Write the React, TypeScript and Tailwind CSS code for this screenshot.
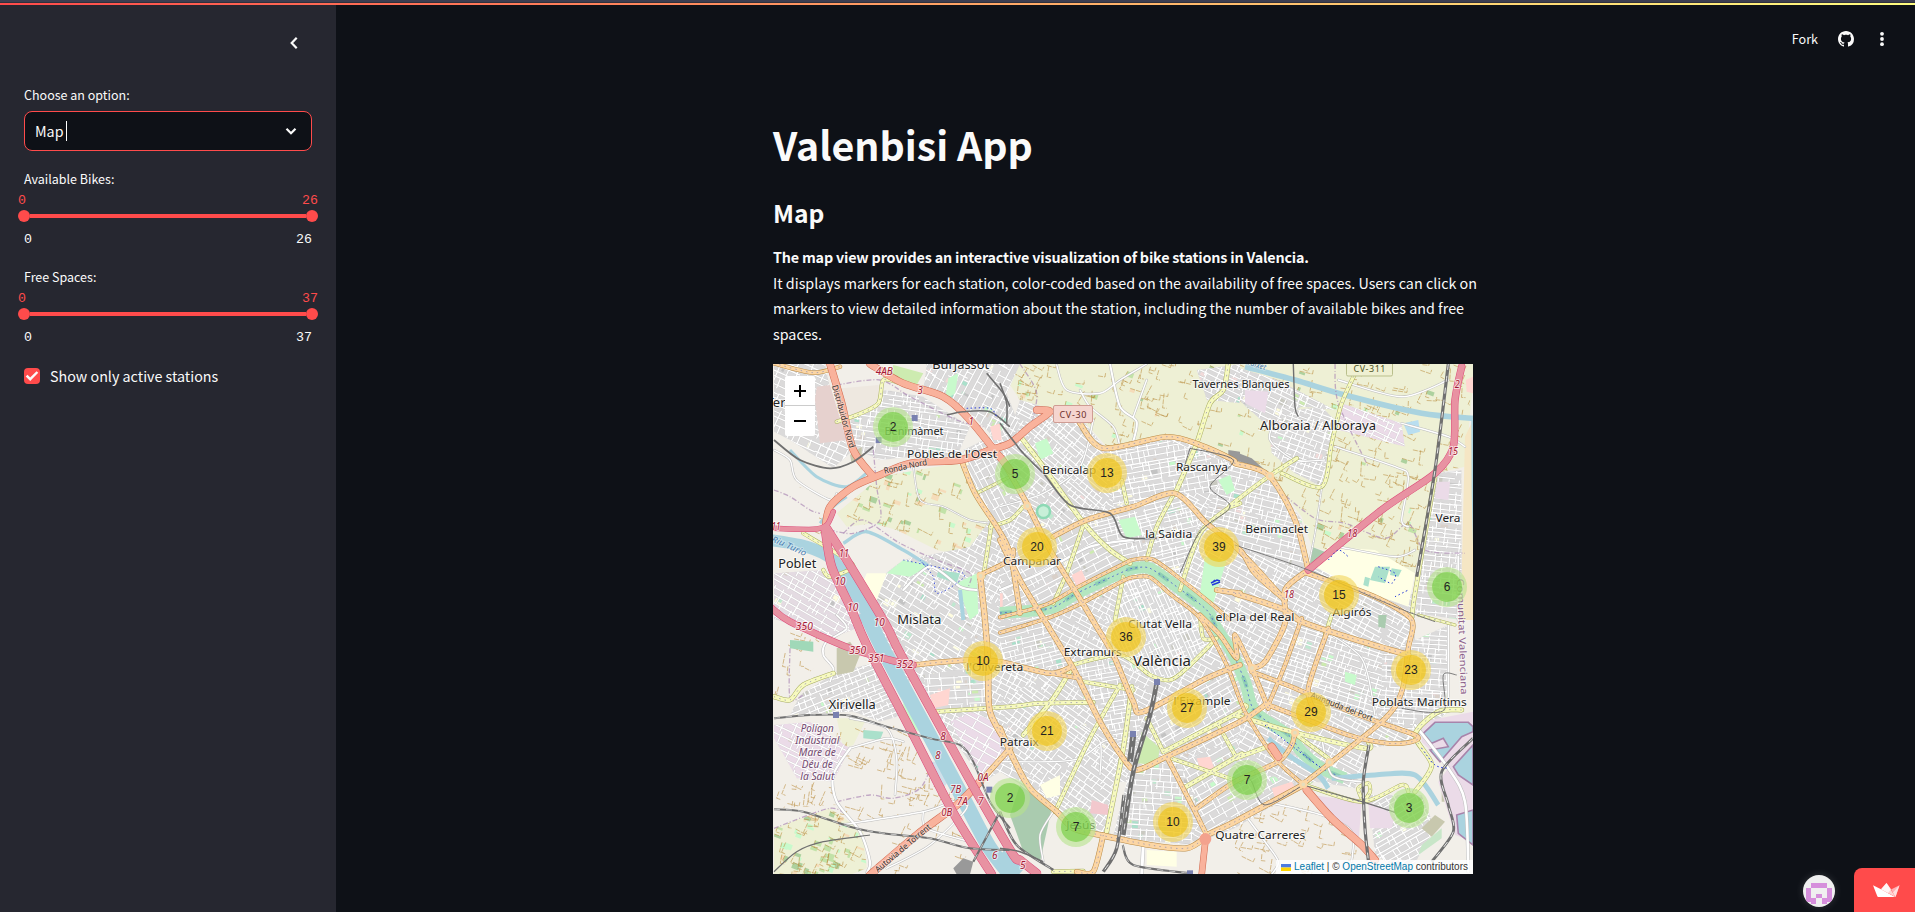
import React from "react";

type Pt = [number, number];

/* Survey tiles: each letter is the origin of a tile measured at three units per pixel. */
const ORIGINS: Record<string, Pt> = {
  a: [770, 360],
  b: [1000, 360],
  c: [1235, 360],
  d: [770, 615],
  e: [1000, 615],
  f: [1235, 615],
};

function parse(src: string): Pt[] {
  let o: Pt = ORIGINS.a;
  const out: Pt[] = [];
  for (const tok of src.trim().split(/\s+/)) {
    if (ORIGINS[tok]) {
      o = ORIGINS[tok];
      continue;
    }
    const [x, y] = tok.split(",").map(Number);
    out.push([o[0] + x / 3, o[1] + y / 3]);
  }
  return out;
}

const f1 = (n: number) => n.toFixed(1);

function poly(src: string): string {
  return "M" + parse(src).map((p) => `${f1(p[0])} ${f1(p[1])}`).join("L") + "Z";
}

function curve(src: string): string {
  const p = parse(src);
  let d = `M${f1(p[0][0])} ${f1(p[0][1])}`;
  for (let i = 0; i < p.length - 1; i++) {
    const a = p[Math.max(0, i - 1)];
    const b = p[i];
    const c = p[i + 1];
    const e = p[Math.min(p.length - 1, i + 2)];
    const k = 7;
    d += `C${f1(b[0] + (c[0] - a[0]) / k)} ${f1(b[1] + (c[1] - a[1]) / k)} ${f1(c[0] - (e[0] - b[0]) / k)} ${f1(c[1] - (e[1] - b[1]) / k)} ${f1(c[0])} ${f1(c[1])}`;
  }
  return d;
}

function random(seed: number) {
  let s = seed * 7919 + 17;
  return () => {
    s = (s * 1664525 + 1013904223) % 4294967296;
    return s / 4294967296;
  };
}

type Zone = { p: string; ang: number; gap: number; fill?: string; blocks?: number };

const ZONES: Zone[] = [
  { p: "a 600,560 720,400 b 0,300 60,120 240,170 320,270 500,230 700,290 c 110,350 200,480 220,620 540,700 f 540,200 640,290 540,380 400,400 360,520 240,500 200,520 f 0,640 e 600,680 300,660 e 0,470 d 640,500 500,300 300,0 a 280,690 400,600", ang: 28, gap: 5, blocks: 320 },
  { p: "a 215,180 240,200 250,110 350,90 460,110 600,200 560,290 430,290 330,300 260,270", ang: 8, gap: 5, blocks: 40 },
  { p: "a 12,12 165,12 200,180 240,280 190,325 60,240 12,215", ang: 24, gap: 6, blocks: 25 },
  { p: "a 470,12 720,12 b 60,12 20,100 60,200 a 700,260 600,160 460,90", ang: -62, gap: 6, blocks: 50 },
  { p: "a 580,270 720,200 720,560 690,560 590,340", ang: 62, gap: 6, blocks: 40 },
  { p: "b 70,240 130,150 250,190 310,270 330,430 160,500 0,250", ang: 40, gap: 5, blocks: 60 },
  { p: "b 320,275 500,240 690,310 640,400 520,400 340,440", ang: -10, gap: 4.6, blocks: 60 },
  { p: "b 690,310 720,290 c 90,350 200,480 220,640 0,560 b 600,490", ang: 14, gap: 5, blocks: 60 },
  { p: "b 250,490 520,400 600,470 540,690 400,600 380,610", ang: -14, gap: 4.6, blocks: 60 },
  { p: "b 0,600 110,500 240,490 380,600 230,710 b 0,770", ang: -28, gap: 6, blocks: 50 },
  { p: "b 370,650 450,630 620,780 e 620,90 520,190 400,170 300,0 b 350,770", ang: 66, gap: 4, fill: "#dcdcdc", blocks: 30 },
  { p: "e 0,20 130,0 220,160 0,160", ang: -14, gap: 5, blocks: 30 },
  { p: "e 220,150 340,130 430,290 400,440 300,310", ang: -10, gap: 4.6, blocks: 30 },
  { p: "e 440,290 700,160 f 60,260 0,380 e 500,430", ang: -30, gap: 5, blocks: 60 },
  { p: "f 60,160 200,10 500,110 520,200 420,320 100,270", ang: 18, gap: 5, blocks: 110 },
  { p: "f 440,120 640,30 640,250 540,350 440,310", ang: 4, gap: 4.4, blocks: 40 },
  { p: "c 600,340 680,330 680,780 540,760", ang: 6, gap: 5, blocks: 50 },
  { p: "c 100,200 180,150 260,140 300,180 260,380 180,340 110,280", ang: 20, gap: 4.5, blocks: 25 },
  { p: "c 0,20 130,60 300,150 200,140 100,200 c 0,110", ang: 26, gap: 5, blocks: 25 },
  { p: "b 590,30 720,12 720,130 620,120", ang: 26, gap: 5, blocks: 12 },
  { p: "a 400,600 440,590 560,640 600,780 d 640,160 480,200 400,200 300,0 a 270,700", ang: 32, gap: 5.5, blocks: 70 },
  { p: "d 90,240 200,170 330,140 400,300 330,320 250,290 60,300", ang: -22, gap: 4.6, blocks: 30 },
  { p: "d 460,180 640,150 660,280 480,290", ang: -3, gap: 6, blocks: 40 },
  { p: "e 160,160 280,260 390,460 330,640 170,590 60,440 0,260", ang: 36, gap: 5, blocks: 60 },
  { p: "e 460,450 540,440 600,600 570,690 360,670 400,480", ang: 4, gap: 5, blocks: 50 },
  { p: "e 540,440 720,370 f 0,450 f 200,510 e 620,650", ang: -30, gap: 6, blocks: 50 },
  { p: "f 400,540 560,540 600,640 520,780 420,720", ang: -30, gap: 5, blocks: 25 },
  { p: "a 12,640 150,630 240,700 330,780 d 180,70 12,12", ang: 30, gap: 6, fill: "#e4dbe2", blocks: 25 },
  { p: "d 12,330 120,320 240,400 190,500 80,490 12,370", ang: 26, gap: 6, fill: "#ebdbe8", blocks: 6 },
  { p: "d 540,320 600,290 680,320 720,420 640,500 580,390", ang: 30, gap: 8, fill: "#ebdbe8", blocks: 8 },
  { p: "c 320,130 500,190 510,260 430,240 310,210", ang: 25, gap: 6, fill: "#ebdbe8", blocks: 2 },
];

const BLOCK_COLORS = ["#c8facc", "#aae0cb", "#fffde0", "#cdebb0", "#c9c9c0", "#ffffe5", "#d9d0c9", "#c3c3c3", "#f2dad9", "#bfe8d0"];

function ZoneShape({ z, i }: { z: Zone; i: number }) {
  const pts = parse(z.p);
  const xs = pts.map((p) => p[0]);
  const ys = pts.map((p) => p[1]);
  const x0 = Math.min(...xs);
  const x1 = Math.max(...xs);
  const y0 = Math.min(...ys);
  const y1 = Math.max(...ys);
  const cx = (x0 + x1) / 2;
  const cy = (y0 + y1) / 2;
  const r = Math.hypot(x1 - x0, y1 - y0) / 2;
  const rnd = random(i + 3);
  let thin = "";
  for (let y = -r; y < r; y += z.gap * (0.75 + rnd() * 0.6)) {
    let x = -r;
    while (x < r) {
      const len = 18 + rnd() * 75;
      const j = (rnd() - 0.5) * 1.6;
      thin += `M${f1(cx + x)} ${f1(cy + y)}L${f1(cx + x + len)} ${f1(cy + y + j)}`;
      x += len + (rnd() < 0.35 ? 6 : 0);
    }
  }
  for (let y = -r; y < r; y += z.gap * 2.4) {
    let x = -r;
    while (x < r) {
      x += z.gap * (0.9 + rnd() * 1.7);
      const len = z.gap * (1 + rnd() * 2.6);
      thin += `M${f1(cx + x)} ${f1(cy + y)}L${f1(cx + x + (rnd() - 0.5) * 2)} ${f1(cy + y + len)}`;
    }
  }
  const blocks = Array.from({ length: z.blocks ?? 0 }, (_, k) => (
    <rect
      key={k}
      x={f1(cx + (rnd() * 2 - 1) * r)}
      y={f1(cy + (rnd() * 2 - 1) * r)}
      width={f1(2 + rnd() * 6)}
      height={f1(2 + rnd() * 5)}
      fill={BLOCK_COLORS[Math.floor(rnd() * BLOCK_COLORS.length)]}
    />
  ));
  return (
    <g>
      <clipPath id={`zone${i}`}>
        <path d={poly(z.p)} />
      </clipPath>
      <g clipPath={`url(#zone${i})`}>
        <path d={poly(z.p)} fill={z.fill ?? "#dbdada"} />
        <g transform={`rotate(${z.ang} ${f1(cx)} ${f1(cy)})`}>
          {blocks}
          <path d={thin} stroke="#bcbcbc" strokeWidth={1.9} fill="none" opacity={0.6} />
          <path d={thin} stroke="#fff" strokeWidth={1.3} fill="none" />
        </g>
      </g>
    </g>
  );
}

const AREAS: [string, string][] = [
  ["#eef0d5", "a 330,350 560,310 590,330 670,490 640,600 500,570 380,510 310,490 230,500 200,460"],
  ["#eef0d5", "b 0,12 720,12 c 640,12 600,330 540,640 230,560 200,470 110,350 b 690,290 500,225 320,260 240,170 60,120 20,60"],
  ["#eef0d5", "a 570,12 720,12 720,60"],
  ["#eef0d5", "d 12,640 180,580 280,650 290,760 240,780 12,780"],
  ["#eef0d5", "c 640,12 720,12 690,320 600,340"],
  ["#eef0d5", "d 200,310 290,310 250,390 220,400"],
  ["#f5e6c4", "c 690,230 714,180 714,780 670,780 680,640"],
  ["#aad3df", "c 709,180 714,180 714,560 710,400"],
];

const PARKS: [string, string][] = [
  ["#c8facc", "b 355,480 405,470 425,525 380,535"],
  ["#c8facc", "b 615,590 680,600 640,730 600,700"],
  ["#c8facc", "a 535,55 565,40 555,100 525,120"],
  ["#c8facc", "b 105,250 140,235 160,280 120,300"],
  ["#c8facc", "d 400,240 440,320 450,350 400,330"],
  ["#c8facc", "a 560,670 620,640 625,760 600,780"],
  ["#c8facc", "f 330,170 365,180 360,210 330,200"],
  ["#c8facc", "b 655,360 690,345 705,390 680,405"],
  ["#c8facc", "a 350,640 400,600 480,615 420,650"],
  ["#cdebb0", "e 425,350 480,400 470,450 410,445"],
  ["#cdebb0", "a 370,15 460,40 440,75 360,55"],
  ["#aacbaf", "e 30,600 60,510 155,580 120,740 70,710"],
  ["#aacbaf", "c 230,560 280,580 270,600 225,610"],
  ["#aacbaf", "f 430,0 455,0 450,40 430,35"],
  ["#c8c8ae", "d 200,100 240,80 270,120 250,170 200,180"],
  ["#c8c8ae", "f 620,510 700,530 714,560 620,560"],
  ["#c8c8ae", "f 560,640 600,600 630,620 590,665"],
  ["#ffffe5", "c 280,560 420,570 540,640 520,740 380,690 240,620"],
  ["#ffffe5", "e 440,705 530,710 530,755 440,750"],
  ["#ffffe5", "a 290,640 350,640 320,720 265,700"],
  ["#ffffe5", "e 120,510 180,480 180,540 140,550"],
  ["#ffd6d1", "b 215,645 245,630 260,665 235,690"],
  ["#ffd6d1", "b 0,700 8,700 8,780 0,780"],
  ["#ffd6d1", "d 480,240 540,220 535,270 490,280"],
  ["#ffd6d1", "a 660,200 690,190 695,240 670,240"],
  ["#ffd6d1", "e 590,430 630,425 645,465 600,460"],
  ["#ffd6d1", "c 692,60 714,50 714,100 695,95"],
  ["#f2c8cd", "e 275,555 325,570 325,600 270,595"],
  ["#ffd6d1", "f 110,520 170,500 180,515 120,550"],
  ["#c8c8ae", "a 240,285 275,260 275,290 245,310"],
  ["#ebdbe8", "f 230,540 380,560 370,690 300,610"],
  ["#ebdbe8", "f 400,560 480,600 470,640 405,640"],
  ["#ebdbe8", "c 605,365 645,365 640,420 600,415"],
  ["#ebdbe8", "c 30,90 100,95 90,160 30,130"],
  ["#f2efe9", "e 340,500 380,500 340,660 325,650"],
  ["#aae0cb", "c 420,620 465,620 450,670 405,660"],
  ["#aae0cb", "c 470,625 500,630 490,650 465,645"],
  ["#aae0cb", "c 390,650 405,655 400,680 385,675"],
  ["#aae0cb", "d 280,345 340,350 330,375 280,370"],
  ["#aae0cb", "a 505,630 570,640 560,670 500,650"],
  ["#a0d8b8", "d 60,75 130,80 130,110 60,100"],
  ["#b9def0", "c 505,190 550,180 555,215 520,225"],
  ["#cfe0ea", "d 475,440 510,440 535,500 510,530 490,500"],
  ["#ebdbe8", "f 560,320 714,290 714,680 660,660 610,500 640,460 560,380"],
  ["#c8e6c8", "f 560,690 620,640 620,670 550,720"],
  ["#999", "d 550,760 580,730 610,740 600,778 560,778"],
  ["#999", "c 0,275 50,295 90,330 0,300"],
  ["#999", "b 685,270 720,275 720,305 685,290"],
];

const RIVERBED = "e 0,-6 b 150,745 230,700 370,635 400,625 450,625 530,680 620,750 e 650,40 700,120 f 30,200 60,290 160,360 200,410 260,460 330,490";

type Road = { k: string; p: string; w?: number };
const STYLE: Record<string, { c: string; f: string; w: number }> = {
  W: { c: "#bdbdbd", f: "#fff", w: 2.4 },
  S: { c: "#a8ad62", f: "#f7fabf", w: 4.2 },
  P: { c: "#b98a45", f: "#fcd6a4", w: 4.8 },
  T: { c: "#cf6a50", f: "#f9b29c", w: 6 },
  M: { c: "#dc4a78", f: "#e892a2", w: 6.4 },
};

const ROADS: Road[] = [
  { k: "W", p: "a 12,270 60,300 80,360 180,420 200,400" },
  { k: "W", p: "a 430,320 450,420 520,440 600,480 670,490", w: 2 },
  { k: "W", p: "b 330,12 360,140 410,185 395,260", w: 3 },
  { k: "W", p: "b 170,15 200,90 300,100 360,60 440,12" },
  { k: "W", p: "b 240,90 270,140 340,200 360,260" },
  { k: "W", p: "b 440,60 400,170" },
  { k: "W", p: "c 310,60 500,110 640,60" },
  { k: "W", p: "c 120,180 105,240 180,300 270,300" },
  { k: "W", p: "c 300,260 480,320 520,350 500,480 520,500" },
  { k: "W", p: "c 260,385 240,520 220,620", w: 2 },
  { k: "W", p: "c 310,560 480,590 540,570" },
  { k: "W", p: "c 500,190 640,230 690,260" },
  { k: "W", p: "d 200,0 230,40 170,80 160,120 190,160 180,200", w: 2.8 },
  { k: "W", p: "d 240,310 350,340 380,430 375,540" },
  { k: "W", p: "d 240,400 190,480 200,560 270,650 300,740 290,775", w: 3.2 },
  { k: "W", p: "d 210,630 460,590 550,560 590,580 480,690 350,760" },
  { k: "W", p: "d 460,590 470,640 600,680" },
  { k: "W", p: "d 240,400 350,370 400,380" },
  { k: "W", p: "e 0,440 150,440 240,430 310,380 350,370" },
  { k: "W", p: "e 240,330 300,380 300,480" },
  { k: "W", p: "e 160,590 120,660 130,740" },
  { k: "W", p: "e 430,690 425,778", w: 4 },
  { k: "W", p: "f 30,600 90,680 130,740 110,778", w: 2.6 },
  { k: "W", p: "f 90,560 260,600 350,650 350,740" },
  { k: "W", p: "f 240,30 380,130 420,300" },
  { k: "W", p: "f 260,370 290,480 380,500", w: 2.6 },
  { k: "W", p: "f 540,330 640,460 690,560 700,770", w: 3.6 },
  { k: "W", p: "f 640,30 640,290", w: 2.4 },
  { k: "W", p: "c 670,590 670,780", w: 3 },
  { k: "W", p: "a 400,690 480,620 570,680 620,690", w: 3.2 },
  { k: "W", p: "b 0,440 130,400 240,320 280,180" },
  { k: "W", p: "b 0,690 120,640 270,560 400,540", w: 3.4 },
  { k: "S", p: "a 200,185 260,165 325,130 340,60 390,70" },
  { k: "S", p: "a 100,520 200,580 250,620 180,650 160,630" },
  { k: "S", p: "a 665,490 640,650" },
  { k: "S", p: "a 620,400 720,350 ", w: 3.4 },
  { k: "S", p: "a 660,500 720,480 b 70,440", w: 4 },
  { k: "S", p: "b 65,235 130,320 200,420 260,500 330,570 390,610", w: 5 },
  { k: "S", p: "b 255,480 200,640 160,730" },
  { k: "S", p: "b 365,360 380,430" },
  { k: "S", p: "b 525,395 470,500 440,600" },
  { k: "S", p: "b 685,12 670,90 630,130 590,250 530,390", w: 5 },
  { k: "S", p: "b 690,440 600,520 540,690", w: 4.4 },
  { k: "S", p: "b 720,430 690,440 c 0,425 100,350 185,295", w: 4.4 },
  { k: "S", p: "c 370,20 320,130 290,250 260,380 140,340" },
  { k: "S", p: "c 600,350 540,700 530,780", w: 4.6 },
  { k: "S", p: "b 370,650 345,780 " },
  { k: "S", p: "d 12,245 60,255 100,210 190,175", w: 5 },
  { k: "S", p: "d 490,290 720,275 e 120,265 280,262", w: 4.6 },
  { k: "S", p: "e 70,360 160,250 215,160", w: 5 },
  { k: "S", p: "e 215,150 360,120 450,180 510,195 560,160 640,80" },
  { k: "S", p: "e 250,200 400,225" },
  { k: "S", p: "e 395,215 370,400 320,650", w: 5 },
  { k: "S", p: "e 165,590 270,370 360,210", w: 4.4 },
  { k: "S", p: "e 600,0 610,70 650,70" },
  { k: "S", p: "e 440,310 490,410", w: 4.2 },
  { k: "S", p: "e 490,410 720,290 f 30,270", w: 4.8 },
  { k: "S", p: "e 500,425 630,470 720,500" },
  { k: "S", p: "e 550,520 720,420 f 0,430 110,390", w: 5 },
  { k: "S", p: "e 655,330 710,430" },
  { k: "S", p: "e 160,770 250,768", w: 4.5 },
  { k: "S", p: "f 0,300 170,350 390,400 400,380", w: 5 },
  { k: "S", p: "f 210,510 380,560 500,510 520,530", w: 4.2 },
  { k: "S", p: "f 680,285 610,290 540,360 590,450 540,530", w: 5 },
  { k: "S", p: "f 380,550 370,520 400,505 405,530 390,555", w: 4 },
  { k: "S", p: "f 290,0 270,60", w: 4.2 },
  { k: "S", p: "f 170,350 280,430", w: 4.2 },
  { k: "S", p: "f 550,0 660,30", w: 3 },
  { k: "P", p: "a 12,10 130,38 210,20", w: 4.4 },
  { k: "P", p: "a 570,290 615,400 680,500 720,580 b 60,760", w: 5.4 },
  { k: "P", p: "b 240,190 310,265 500,230 600,255 700,300 c 0,310 100,345 180,480 220,630", w: 5.6 },
  { k: "P", p: "b 0,290 80,430 150,570 230,700 290,800 e 340,120 400,260 430,290 620,190 720,150", w: 5.6 },
  { k: "P", p: "b 160,530 260,480 400,440 525,400 620,490 720,570 c 60,640 150,720", w: 5.4 },
  { k: "P", p: "b 0,540 60,660 130,775 e 220,160 300,320 370,430 410,465 500,425 720,320 f 90,270", w: 5.6 },
  { k: "P", p: "a 630,645 645,780 d 655,150 660,290 720,400", w: 6.2 },
  { k: "P", p: "a 630,645 720,600 b 40,570", w: 5 },
  { k: "P", p: "b 0,772 140,733 230,683 370,612 400,599 460,599 545,660 640,736 690,780", w: 4 },
  { k: "P", p: "b 0,818 150,772 240,732 370,662 400,652 450,652 515,706 600,775 e 680,150 f 30,290 120,430 200,505", w: 4 },
  { k: "P", p: "e 600,0 660,60 710,130 f 0,60 50,160 100,280", w: 5 },
  { k: "P", p: "d 430,150 590,135 e 0,140 150,175 215,155", w: 5.4 },
  { k: "P", p: "e 150,175 240,190", w: 4.6 },
  { k: "P", p: "c 0,560 60,620 150,720", w: 5 },
  { k: "P", p: "c 220,630 150,690 150,790 f 90,140 50,160", w: 5.6 },
  { k: "P", p: "c 215,640 340,680 440,720 530,780 f 520,100 500,230 440,320 200,510", w: 5.2 },
  { k: "P", p: "c 0,700 150,750 f 200,20 350,70 520,120", w: 6 },
  { k: "P", p: "b 650,690 720,700", w: 5.6 },
  { k: "P", p: "f 200,10 150,150 100,270", w: 4.4 },
  { k: "P", p: "f 280,40 220,220 240,290", w: 5 },
  { k: "P", p: "f 50,170 180,220 370,300 540,360 530,380 460,385 340,360 100,270", w: 4.8 },
  { k: "P", p: "f 180,350 170,390 130,440 0,500 e 590,580", w: 5 },
  { k: "P", p: "f 205,510 0,620 e 620,660", w: 6 },
  { k: "P", p: "d 720,400 640,490", w: 5.6 },
  { k: "P", p: "e 0,340 40,430 90,520 170,590 220,640 300,660 450,690 560,700 620,665", w: 6 },
  { k: "P", p: "e 500,425 570,560 620,660", w: 5 },
  { k: "P", p: "e 310,660 280,770 230,770", w: 5.6 },
  { k: "T", p: "a 300,12 400,70 520,110 600,180 720,330 b 0,290", w: 7.4 },
  { k: "T", p: "a 180,12 215,130 250,270 310,350", w: 7.6 },
  { k: "T", p: "a 165,510 180,440 250,380 330,345 420,310 570,300 660,270 720,250 b 90,200 150,155 110,150", w: 7.4 },
  { k: "T", p: "d 300,780 440,660 560,570 630,500", w: 8 },
  { k: "T", p: "f 110,395 130,425", w: 8 },
  { k: "T", p: "f 215,525 290,610 380,690 420,735", w: 8 },
  { k: "T", p: "e 617,670 605,778", w: 6.6 },
  { k: "M", p: "a 12,505 130,508 170,495 190,455", w: 5.4 },
  { k: "M", p: "a 165,505 185,620 245,750 d 290,90 430,360 548,590 665,778", w: 9 },
  { k: "M", p: "a 170,505 230,600 345,790 d 388,110 508,330 630,550 730,720 e 60,735 110,775", w: 9 },
  { k: "M", p: "a 0,740 d 60,20 240,100 360,135 430,150", w: 7 },
  { k: "M", p: "c 680,20 660,120 655,260 600,340 440,450 220,630", w: 7.4 },
];

const WATER = [
  { p: "a 0,540 110,560 190,600 250,690 310,790", w: 12 },
  { p: "d 285,-10 343,110 470,345 590,570 660,700 730,790", w: 15 },
  { p: "e 0,720 60,775", w: 12 },
  { p: "a 60,270 140,350 230,380 300,330", w: 3 },
  { p: "a 150,490 190,440 230,410", w: 3 },
  { p: "a 220,550 290,515 400,570 480,620", w: 3.4 },
  { p: "c 30,20 180,60 330,105 560,160 714,175", w: 5.6 },
  { p: "f 100,370 160,420 250,480 280,520", w: 5 },
  { p: "f 290,490 420,480 540,480 610,570", w: 5 },
  { p: "a 570,690 580,780", w: 4 },
];

const HARBOUR = [
  "f 565,355 600,322 700,322 714,335 714,350 680,365 615,440 585,405 640,395 625,370 590,385",
  "f 655,455 714,390 714,510 670,480",
  "f 665,600 714,585 714,690 670,655",
];

const RAILS: { p: string; w: number }[] = [
  { p: "a 12,240 90,300 180,325 250,305 310,260", w: 1.8 },
  { p: "a 530,165 580,155 660,155 720,200", w: 1.6 },
  { p: "a 650,40 700,100 720,140", w: 1.6 },
  { p: "b 0,190 70,280 130,340 210,435 330,460 370,530 470,535", w: 1.7 },
  { p: "b 0,70 20,130 20,190", w: 1.6 },
  { p: "b 570,265 550,330", w: 1 },
  { p: "b 570,265 700,300 630,380 690,440 600,515 540,640", w: 1 },
  { p: "c 0,555 220,630 480,740 600,785", w: 0.9 },
  { p: "c 175,12 180,140 190,170", w: 1.4 },
  { p: "c 640,12 600,330 545,650", w: 3.2 },
  { p: "d 12,310 120,300 240,302 350,335 480,370 570,390 610,440 660,560 720,640", w: 1.9 },
  { p: "d 12,583 100,590 240,635 340,655 480,670 600,700 720,705", w: 2 },
  { p: "d 12,770 80,710 160,680 300,660", w: 1.2 },
  { p: "d 690,590 610,740", w: 2.2 },
  { p: "e 0,590 50,690 160,765", w: 2.4 },
  { p: "e 0,700 60,710 130,740", w: 1.6 },
  { p: "e 470,205 450,300 400,470 370,660", w: 4.6 },
  { p: "e 400,360 390,440", w: 6 },
  { p: "e 372,540 350,700 310,770", w: 3.4 },
  { p: "e 368,690 400,750 570,775", w: 2.2 },
  { p: "f 402,390 385,500 390,640 400,735", w: 3.2 },
  { p: "f 714,370 620,470 640,570 655,650 590,740", w: 2.8 },
  { p: "f 205,510 90,570 50,500 30,480", w: 1 },
  { p: "f 205,510 380,560 480,592", w: 1.2 },
  { p: "f 500,280 580,292 630,280 625,180 665,180", w: 0.9 },
];

const BOUNDARIES = [
  "a 12,390 60,410 120,450 150,460",
  "a 200,75 330,60 420,110 560,180 640,200",
  "a 220,520 280,480 390,550 500,600 600,640 590,690",
  "a 310,270 320,380 330,480 250,520 180,510",
  "c 300,12 310,130 400,320 ",
  "c 130,390 240,475 330,490 450,535 520,490 570,570 690,580",
  "b 60,12 110,100 90,210",
  "d 60,100 60,250 100,240",
  "d 200,560 300,540 370,550 450,520 490,440",
  "d 12,640 180,580 240,610",
];

const LABELS: { t: string; at: string; w: number; s: number; r?: number; c?: string; i?: boolean }[] = [
  { t: "Burjassot", at: "a 572,28", w: 57, s: 12 },
  { t: "Ter", at: "a 18,140", w: 19, s: 12 },
  { t: "Benimàmet", at: "a 432,224", w: 59, s: 11 },
  { t: "Pobles de l'Oest", at: "a 546,295", w: 90, s: 11.5 },
  { t: "Poblet", at: "a 82,625", w: 38, s: 12 },
  { t: "Mislata", at: "d 448,27", w: 44, s: 12 },
  { t: "Xirivella", at: "d 247,282", w: 47, s: 12 },
  { t: "Benicalap", at: "b 208,343", w: 54, s: 11 },
  { t: "Rascanya", at: "b 606,333", w: 52, s: 11 },
  { t: "la Saïdia", at: "b 506,534", w: 47, s: 11 },
  { t: "Campanar", at: "b 96,614", w: 58, s: 11 },
  { t: "Tavernes Blanques", at: "c 18,83", w: 97, s: 11 },
  { t: "Alboraia / Alboraya", at: "c 249,209", w: 116, s: 12.5 },
  { t: "Benimaclet", at: "c 125,520", w: 63, s: 11.5 },
  { t: "Vera", at: "c 639,486", w: 25, s: 11.5 },
  { t: "Algirós", at: "c 351,769", w: 39, s: 11.5 },
  { t: "el Pla del Real", at: "f 60,19", w: 79, s: 11.5 },
  { t: "Ciutat Vella", at: "e 480,39", w: 64, s: 11.5 },
  { t: "Extramurs", at: "e 278,123", w: 58, s: 11.5 },
  { t: "València", at: "e 486,152", w: 58, s: 14 },
  { t: "l'Olivereta", at: "e -16,168", w: 57, s: 11.5 },
  { t: "Patraix", at: "e 58,392", w: 39, s: 11.5 },
  { t: "l'Eixample", at: "e 606,271", w: 57, s: 11.5 },
  { t: "Jesús", at: "e 242,642", w: 29, s: 11.5 },
  { t: "Poblats Marítims", at: "f 553,272", w: 95, s: 11.5 },
  { t: "Quatre Carreres", at: "f 76,671", w: 90, s: 11.5 },
  { t: "Distribuidor Nord", at: "a 212,172", w: 65, s: 8.5, r: 74, c: "#333" },
  { t: "Ronda Nord", at: "a 408,328", w: 44, s: 8.5, r: -12, c: "#333" },
  { t: "Autovia de Torrent", at: "d 404,706", w: 70, s: 8.5, r: -40, c: "#333" },
  { t: "Avinguda del Port", at: "f 317,283", w: 66, s: 8.5, r: 21, c: "#333" },
  { t: "Riu Turio", at: "a 54,566", w: 37, s: 8.5, r: 24, c: "#4d80b3", i: true },
  { t: "Barranc del Carraixet", at: "c -10,-2", w: 70, s: 8, r: 18, c: "#4d80b3", i: true },
  { t: "Polígon", at: "d 142,351", w: 33, s: 10, c: "#734a70", i: true },
  { t: "Industrial", at: "d 142,387", w: 44, s: 10, c: "#734a70", i: true },
  { t: "Mare de", at: "d 142,422", w: 37, s: 10, c: "#734a70", i: true },
  { t: "Déu de", at: "d 142,458", w: 31, s: 10, c: "#734a70", i: true },
  { t: "la Salut", at: "d 142,494", w: 34, s: 10, c: "#734a70", i: true },
  { t: "Comunitat Valenciana", at: "c 672,830", w: 116, s: 9.5, r: 88, c: "#8d618b" },
  ...(
    [
      ["4AB", "a 343,46", 17],
      ["3", "a 451,102", 5],
      ["1", "a 604,194", 5],
      ["11", "a 18,510", 9],
      ["11", "a 222,590", 10],
      ["10", "a 210,676", 11],
      ["10", "a 248,752", 11],
      ["2", "c 667,84", 5],
      ["15", "c 654,284", 10],
      ["18", "c 352,530", 10],
      ["18", "c 162,714", 10],
      ["350", "d 103,45", 17],
      ["350", "d 263,117", 17],
      ["351", "d 319,142", 16],
      ["352", "d 404,160", 17],
      ["10", "d 328,33", 11],
      ["8", "d 519,374", 5.5],
      ["8", "d 503,432", 5.5],
      ["0A", "d 639,497", 11],
      ["7B", "d 557,533", 11],
      ["7A", "d 577,569", 11],
      ["7", "d 632,571", 5.5],
      ["0B", "d 530,603", 11],
      ["6", "d 674,733", 5.5],
      ["5", "e 68,763", 5.5],
    ] as [string, string, number][]
  ).map(([t, at, w]) => ({ t, at, w, s: 10, c: "#a51a35", i: true })),
];

const FIELDS: { p: string; n: number }[] = [
  { p: AREAS[0][1], n: 70 },
  { p: AREAS[1][1], n: 520 },
  { p: AREAS[3][1], n: 60 },
  { p: "c 640,12 714,12 690,320 600,340", n: 20 },
  { p: "a 12,340 180,430 220,560 400,590 200,560 12,450", n: 14 },
  { p: "d 200,330 440,330 500,480 590,560 200,640", n: 90 },
  { p: "d 12,500 190,500 200,570 12,580", n: 22 },
  { p: "f 0,620 200,530 340,640 400,780 f 0,780", n: 50 },
  { p: "d 320,680 460,600 620,690 540,778 360,778", n: 20 },
  { p: "d 12,20 190,80 60,250 12,240", n: 18 },
];

function Fields() {
  return (
    <>
      {FIELDS.map((f, i) => {
        const pts = parse(f.p);
        const xs = pts.map((p) => p[0]);
        const ys = pts.map((p) => p[1]);
        const x0 = Math.min(...xs);
        const y0 = Math.min(...ys);
        const w = Math.max(...xs) - x0;
        const h = Math.max(...ys) - y0;
        const rnd = random(i + 90);
        let d = "";
        const greens: React.ReactNode[] = [];
        const farmland = i < 3;
        for (let k = 0; k < f.n; k++) {
          const x = x0 + rnd() * w;
          const y = y0 + rnd() * h;
          const a = (rnd() < 0.5 ? 0.3 : 1.85) + (rnd() - 0.5) * 0.5;
          const l = 4 + rnd() * 11;
          const ex = x + Math.cos(a) * l;
          const ey = y + Math.sin(a) * l;
          d += `M${f1(x)} ${f1(y)}L${f1(ex)} ${f1(ey)}l${f1(Math.sin(a) * 4)} ${f1(-Math.cos(a) * 4)}`;
          if (farmland && k % (i === 1 ? 6 : 1) === 0)
            greens.push(
              <rect
                key={k}
                x={f1(x)}
                y={f1(y)}
                width={f1(2 + rnd() * 6)}
                height={f1(2 + rnd() * 4)}
                transform={`rotate(20 ${f1(x)} ${f1(y)})`}
                fill={["#c2e2a8", "#add19e", "#c8facc", "#f5dcba"][Math.floor(rnd() * 4)]}
              />,
            );
        }
        return (
          <g key={i} clipPath={`url(#field${i})`}>
            <clipPath id={`field${i}`}>
              <path d={poly(f.p)} />
            </clipPath>
            {greens}
            <path d={d} fill="none" stroke="#b98d3e" strokeWidth={0.75} opacity={0.75} strokeDasharray="5 1" />
          </g>
        );
      })}
    </>
  );
}

function CityMap() {
  const rw = (r: Road) => r.w ?? STYLE[r.k].w;
  return (
    <svg className="block h-[510px] w-[700px]" viewBox="773 364 700 510" role="img" aria-label="València">
      <rect x="773" y="364" width="700" height="510" fill="#f2efe9" />
      {AREAS.map(([c, p], i) => (
        <path key={i} d={poly(p)} fill={c} />
      ))}
      <Fields />
      {ZONES.map((z, i) => (
        <ZoneShape key={i} z={z} i={i} />
      ))}
      {PARKS.map(([c, p], i) => (
        <path key={i} d={poly(p)} fill={c} />
      ))}
      <path d={poly("a 140,80 180,75 230,240 150,250 135,120")} fill="#e6d1ce" />
      <path d={poly("a 215,85 325,75 330,110 290,160 220,165")} fill="#eee8e0" />
      <path d={curve(RIVERBED)} fill="none" stroke="#b4e6c0" strokeWidth="12" />
      <path d={curve(RIVERBED)} fill="none" stroke="#8fcfb4" strokeWidth="4" strokeDasharray="12 22" />
      <path d={curve(RIVERBED)} fill="none" stroke="#4e5ad0" strokeWidth="0.8" strokeDasharray="2 3" />
      {WATER.map((w, i) => (
        <path key={i} d={curve(w.p)} fill="none" stroke="#aad3df" strokeWidth={w.w} />
      ))}
      {HARBOUR.map((p, i) => (
        <path key={i} d={poly(p)} fill="#aad3df" stroke="#a884ab" strokeWidth="1.6" />
      ))}
      <circle cx="1043.5" cy="511.5" r="6.5" fill="#c8efd8" stroke="#8ed9b5" strokeWidth="2.5" />
      {BOUNDARIES.map((p, i) => (
        <path key={i} d={curve(p)} fill="none" stroke="#ac8ab5" strokeWidth="1.3" strokeDasharray="5 2 1 2" opacity="0.7" />
      ))}
      {["W", "S", "P", "T", "M"].map((k) => (
        <g key={k} fill="none" strokeLinecap="round">
          {ROADS.filter((r) => r.k === k).map((r, i) => (
            <path key={i} d={curve(r.p)} stroke={STYLE[k].c} strokeWidth={rw(r)} />
          ))}
          {ROADS.filter((r) => r.k === k).map((r, i) => (
            <path key={i} d={curve(r.p)} stroke={STYLE[k].f} strokeWidth={rw(r) - 1} />
          ))}
          {(k === "S" || k === "P") &&
            ROADS.filter((r) => r.k === k).map((r, i) => (
              <path key={i} d={curve(r.p)} stroke="#9a96b4" strokeWidth="0.8" strokeDasharray="1.5 4" strokeLinecap="butt" />
            ))}
        </g>
      ))}
      {RAILS.map((r, i) => (
        <g key={i} fill="none">
          <path d={curve(r.p)} stroke="#707070" strokeWidth={r.w} />
          {r.w > 1.8 && (
            <path d={curve(r.p)} stroke="#e8e8e8" strokeWidth={r.w > 2.5 ? 1 : 0.7} strokeDasharray="6 6" />
          )}
        </g>
      ))}
      {["a 434,174", "a 326,240", "d 198,300", "d 658,524", "e 471,201", "e 399,357", "e 570,775"].map((s) => {
        const [x, y] = parse(s)[0];
        return <rect key={s} x={x - 3} y={y - 3} width="6" height="6" fill="#7981b0" />;
      })}
      {["f 51,159", "f 180,353", "f 284,442", "a 632,648", "b 82,438", "c 105,348", "f 205,508"].map((s) => {
        const [x, y] = parse(s)[0];
        return <circle key={s} cx={x} cy={y} r="3" fill="#e6ddbc" stroke="#fcd6a4" strokeWidth="2.2" />;
      })}
      <circle cx="1205.3" cy="839" r="6" fill="#f3a28e" />
      <g stroke="#2439d8" fill="none">
        <path d="M1211 583l6-3 3 1m-8 4l8-3m-7 0l2-2" strokeWidth="1.6" />
        <path d={curve("a 400,600 470,615 580,640 560,670 500,700 490,650 450,600")} strokeWidth="0.8" strokeDasharray="1.5 2.5" />
        <path d={curve("c 430,620 480,640 470,670 430,650")} strokeDasharray="1.5 2.5" />
        <path d={curve("c 280,600 310,570 340,590")} strokeDasharray="1.5 2.5" />
        <path d={curve("c 480,710 520,690")} strokeDasharray="1.5 2.5" />
        <path d={curve("f 560,400 600,450 640,460")} strokeDasharray="1.5 2.5" />
        <path d={curve("f 90,330 180,400 260,460")} strokeDasharray="1.5 2.5" />
        <path d={curve("a 590,145 660,145 680,170")} strokeDasharray="1.5 2.5" />
      </g>
      <rect x="1053.5" y="405.5" width="39" height="17" rx="1.5" fill="#f5d5cf" stroke="#cf9c93" />
      <rect x="1346.5" y="358.5" width="46" height="17.5" rx="1.5" fill="#eff0d2" stroke="#b9bf8c" />
      <g style={{ fontFamily: '"Noto Sans", sans-serif' }} textAnchor="middle">
        <text x="1073" y="417.500" fontSize="9" textLength="27" fill="#6d2e2a">
          CV-30
        </text>
        <text x="1369.5" y="372" fontSize="9" textLength="32" fill="#4c5222">
          CV-311
        </text>
        {LABELS.map((l, i) => {
          const [x, y] = parse(l.at)[0];
          return (
            <text
              key={i}
              x={f1(x)}
              y={f1(y)}
              fontSize={l.s}
              textLength={l.w}
              lengthAdjust="spacingAndGlyphs"
              fontStyle={l.i ? "italic" : "normal"}
              fill={l.c ?? "#222"}
              stroke="#fff"
              strokeOpacity={l.r ? 0.3 : 0.65}
              strokeWidth="2"
              paintOrder="stroke"
              transform={l.r ? `rotate(${l.r} ${f1(x)} ${f1(y)})` : undefined}
            >
              {l.t}
            </text>
          );
        })}
      </g>
    </svg>
  );
}

const CLUSTERS: [number, string][] = [
  [2, "a 368,201"],
  [5, "b 45,341"],
  [13, "b 321,338"],
  [20, "b 110,560"],
  [39, "b 657,560"],
  [15, "c 312,704"],
  [6, "c 636,680"],
  [36, "e 378,65"],
  [10, "d 639,137"],
  [23, "f 527,166"],
  [27, "e 560,278"],
  [29, "f 227,290"],
  [21, "e 140,347"],
  [7, "f 37,494"],
  [3, "f 521,578"],
  [2, "e 30,548"],
  [7, "e 227,637"],
  [10, "e 518,620"],
];

function Cluster({ n, at }: { n: number; at: string }) {
  const [x, y] = parse(at)[0];
  const small = n < 10;
  return (
    <div
      className={`absolute grid size-10 place-items-center rounded-full ${small ? "bg-[rgba(181,226,140,0.6)]" : "bg-[rgba(241,211,87,0.6)]"}`}
      style={{ left: Math.round(x - 773 - 20), top: Math.round(y - 364 - 20) }}
    >
      <div
        className={`grid size-[30px] place-items-center rounded-full font-['Liberation_Sans',sans-serif] text-xs text-[#222] ${small ? "bg-[rgba(110,204,57,0.6)]" : "bg-[rgba(240,194,12,0.6)]"}`}
      >
        {n}
      </div>
    </div>
  );
}

function RangeSlider({ label, max }: { label: string; max: number }) {
  return (
    <div className="h-[98px]">
      <div className="flex h-5 items-center text-[12.5px]">{label}</div>
      <div className="-mx-[6px] mt-[4px] flex h-4 items-center justify-between font-['Liberation_Mono',monospace] text-[13.3px] leading-4 text-[#ff4b4b]">
        <span>0</span>
        <span>{max}</span>
      </div>
      <div className="-mx-[6px] mt-px flex h-3 items-center">
        <span className="size-3 rounded-full bg-[#ff4b4b]" />
        <span className="h-1 flex-1 bg-[#ff4b4b]" />
        <span className="size-3 rounded-full bg-[#ff4b4b]" />
      </div>
      <div className="mt-2 flex h-5 items-center justify-between font-['Liberation_Mono',monospace] text-[13.3px] text-[#fafafa]">
        <span>0</span>
        <span>{max}</span>
      </div>
    </div>
  );
}

function Sidebar() {
  return (
    <aside className="flex w-[336px] shrink-0 flex-col bg-[#262730] px-6">
      <div className="flex h-[80px] items-start justify-end pr-[9px] pt-[29px]">
        <svg className="size-[18px]" viewBox="0 0 18 18" fill="none" stroke="#fafafa" strokeWidth="2.2">
          <path d="M11.7 3.8L6.7 9l5 5.200" />
        </svg>
      </div>
      <div className="flex h-5 items-center text-[12.5px]">Choose an option:</div>
      <div className="mt-[6px] flex h-10 items-center rounded-lg border border-[#ff4b4b] bg-[#0e1117] pl-[10px] pr-[12px]">
        <span className="text-[14.3px]">Map</span>
        <span className="ml-[2px] h-5 w-px bg-white" />
        <svg className="ml-auto size-4" viewBox="0 0 16 16" fill="none" stroke="#fafafa" strokeWidth="2.2">
          <path d="M3.5 5.7L8 10.2l4.5-4.5" />
        </svg>
      </div>
      <div className="mt-[18px]">
        <RangeSlider label="Available Bikes:" max={26} />
        <RangeSlider label="Free Spaces:" max={37} />
      </div>
      <div className="mt-px flex h-5 items-center">
        <span className="grid size-4 place-items-center rounded-[4px] bg-[#ff4b4b]">
          <svg className="size-4" viewBox="0 0 16 16" fill="none" stroke="#fafafa" strokeWidth="2.4">
            <path d="M2.6 7.6l3.6 3.6 7.2-7.2" />
          </svg>
        </span>
        <span className="ml-[10px] text-[14.3px]">Show only active stations</span>
      </div>
    </aside>
  );
}

function Toolbar() {
  return (
    <div className="flex h-[68px] items-center justify-end pr-[25px]">
      <span className="text-[12.6px]">Fork</span>
      <svg className="ml-[20px] size-4" viewBox="0 0 16 16" fill="#fafafa">
        <path d="M8 0C3.58 0 0 3.58 0 8c0 3.54 2.29 6.53 5.47 7.59.4.07.55-.17.55-.38 0-.19-.01-.82-.01-1.49-2.01.37-2.53-.49-2.69-.94-.09-.23-.48-.94-.82-1.13-.28-.15-.68-.52-.01-.53.63-.01 1.08.58 1.23.82.72 1.21 1.87.87 2.33.66.07-.52.28-.87.51-1.07-1.78-.2-3.64-.89-3.64-3.95 0-.87.31-1.59.82-2.15-.08-.2-.36-1.02.08-2.12 0 0 .67-.21 2.2.82.64-.18 1.32-.27 2-.27s1.36.09 2 .27c1.53-1.04 2.2-.82 2.2-.82.44 1.1.16 1.92.08 2.12.51.56.82 1.27.82 2.15 0 3.07-1.87 3.75-3.65 3.95.29.25.54.73.54 1.48 0 1.07-.01 1.93-.01 2.2 0 .21.15.46.55.38A8.01 8.01 0 0 0 16 8c0-4.42-3.58-8-8-8z" />
      </svg>
      <svg className="ml-[20px] size-4" viewBox="0 0 16 16" fill="#fafafa">
        <circle cx="8" cy="2.8" r="1.9" />
        <circle cx="8" cy="8" r="1.9" />
        <circle cx="8" cy="13.2" r="1.9" />
      </svg>
    </div>
  );
}

function ZoomControl() {
  return (
    <div className="absolute left-[12px] top-[12px] flex w-[30px] flex-col overflow-hidden rounded-[2px] bg-white text-black">
      <button className="grid h-[30px] place-items-center border-b border-[#ccc]">
        <svg className="size-3" viewBox="0 0 12 12" stroke="#000" strokeWidth="2">
          <path d="M0 6h12M6 0v12" />
        </svg>
      </button>
      <button className="grid h-[30px] place-items-center">
        <svg className="size-3" viewBox="0 0 12 12" stroke="#000" strokeWidth="2">
          <path d="M0 6h12" />
        </svg>
      </button>
    </div>
  );
}

function Attribution() {
  return (
    <div className="absolute bottom-0 right-0 flex h-[14px] items-center bg-white/80 px-[5px] font-['Liberation_Sans',sans-serif] text-[10px] leading-[14px] text-[#333]">
      <svg className="mr-[3px] h-[7px] w-[10px]" viewBox="0 0 10 7">
        <path fill="#4c7be1" d="M0 0h10v3.500H0z" />
        <path fill="#ffd500" d="M0 3.500h10V7H0z" />
      </svg>
      <span className="whitespace-pre">
        <span className="text-[#0078a8]">Leaflet</span> | © <span className="text-[#0078a8]">OpenStreetMap</span> contributors
      </span>
    </div>
  );
}

function Badges() {
  return (
    <div className="absolute bottom-0 right-0 flex items-end">
      <div className="mb-[5px] mr-[19px] size-8 overflow-hidden rounded-full bg-[#f0f0f0] shadow-[0_0_8px_rgba(255,255,255,0.15)]">
        <svg className="size-8" viewBox="0 0 32 32" fill="#d68fdc" shapeRendering="crispEdges">
          <path d="M8 8h16v5h-16zM3 13h5v14h-5zM24 13h5v14h-5zM8 23h5v6h-5zM19 23h5v6h-5zM13 19h6v4h-6z" />
        </svg>
      </div>
      <div className="grid h-11 w-[61px] place-items-center rounded-tl-lg bg-[#ff4b4b] pl-[4px]">
        <svg className="h-[15px] w-[27px]" viewBox="0 0 27 15">
          <path fill="#fff" d="M0 2.3L8 6.3 22 14H5.2q-.6 0-.9-.7z" />
          <path fill="#ffd2d2" d="M13.5 0l-5.5 6.3L22.5 14z" />
          <path fill="#fff" opacity=".8" d="M13.5 0L8 6.3l7 3.7 3-3.8z" />
          <path fill="#ffb0b4" d="M26.5 2.3L18 6.4l4.5 7.6z" />
          <path fill="#ffe0e0" d="M26.5 2.3L20 9.500l2.5 4.500z" />
        </svg>
      </div>
    </div>
  );
}

export default function App() {
  return (
    <div className="relative flex h-[912px] w-[1915px] flex-col overflow-hidden bg-[#0e1117] font-['Noto_Sans_CJK_SC',sans-serif] text-[#fafafa]">
      <div className="h-[3px] shrink-0 border-b border-[#30313d] bg-[#3d3e50]" />
      <div className="h-[2px] shrink-0 bg-[linear-gradient(90deg,#ff4b4b,#fffd80)]" />
      <div className="flex min-h-0 flex-1">
        <Sidebar />
        <main className="flex min-w-0 flex-1 flex-col">
          <Toolbar />
          <div className="ml-[437px] flex w-[706px] flex-col">
            <h1 className="mt-[36px] flex h-[70px] items-center whitespace-nowrap text-[39.3px] font-bold">Valenbisi App</h1>
            <h2 className="mt-[9px] flex h-12 items-center text-[24.6px] font-bold">Map</h2>
            <p className="mt-2 w-[712px] whitespace-nowrap text-[14.33px] leading-[25.6px]">
              <strong className="tracking-[-0.18px]">The map view provides an interactive visualization of bike stations in Valencia.</strong>
              <br />
              It displays markers for each station, color-coded based on the availability of free spaces. Users can click on
              <br />
              markers to view detailed information about the station, including the number of available bikes and free
              <br />
              spaces.
            </p>
            <div className="relative mt-[18px] h-[510px] w-[700px] overflow-hidden">
              <CityMap />
              {CLUSTERS.map(([n, at]) => (
                <Cluster key={at} n={n} at={at} />
              ))}
              <ZoomControl />
              <Attribution />
            </div>
          </div>
        </main>
      </div>
      <Badges />
    </div>
  );
}
